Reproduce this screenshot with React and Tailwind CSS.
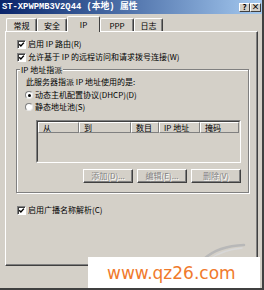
import React from "react";

function Check() {
  return (
    <span className="w-[9px] h-[9px] shrink-0 bg-white border border-t-[#808080] border-l-[#808080] border-r-white border-b-white shadow-[inset_1px_1px_0_#404040] flex items-center justify-center">
      <svg width="7" height="7" viewBox="0 0 7 7">
        <path d="M1.2 3.2 L2.9 5 L5.9 1.6" stroke="#000" strokeWidth="1.4" fill="none" />
      </svg>
    </span>
  );
}

function Radio({ on }) {
  return (
    <span className="w-[8px] h-[8px] shrink-0 rounded-full bg-white border border-t-[#808080] border-l-[#808080] border-r-[#e8e8e8] border-b-[#e8e8e8] flex items-center justify-center">
      {on && <span className="w-[3px] h-[3px] rounded-full bg-black" />}
    </span>
  );
}

function Tab({ label, w, selected }) {
  if (selected) {
    return (
      <div
        className={`${w} h-[16px] -mb-[1px] relative z-10 bg-[#d4d0c8] border-t border-l border-r border-t-white border-l-white border-r-[#404040] rounded-t-[2px] flex items-start justify-center pt-[3px] text-[8px] leading-[9px]`}
      >
        {label}
      </div>
    );
  }
  return (
    <div
      className={`${w} h-[13px] bg-[#d4d0c8] border-t border-l border-r border-t-white border-l-white border-r-[#404040] shadow-[inset_-1px_0_0_#808080] rounded-t-[2px] flex items-start justify-center pt-[2px] text-[8px] leading-[9px]`}
    >
      {label}
    </div>
  );
}

function HeadCell({ label, w }) {
  return (
    <div className={`${w} h-[11px] border-t border-l border-r border-b border-t-white border-l-white border-r-[#808080] border-b-[#808080] pl-[4px] text-[8px] leading-[9px] flex items-center`}>
      {label}
    </div>
  );
}

function DisBtn({ label }) {
  return (
    <div className="w-[50px] h-[14px] bg-[#d4d0c8] border border-t-white border-l-white border-r-[#404040] border-b-[#404040] shadow-[inset_-1px_-1px_0_#808080] flex items-center justify-center text-[8px] leading-none text-[#808080] [text-shadow:1px_1px_0_#fff]">
      {label}
    </div>
  );
}

function TitleBtn({ children }) {
  return (
    <div className="w-[11px] h-[9px] bg-[#d4d0c8] border border-t-white border-l-white border-r-[#404040] border-b-[#404040] flex items-center justify-center text-[8px] font-bold leading-none text-black">
      {children}
    </div>
  );
}

export default function App() {
  return (
    <div className="w-[264px] h-[290px] bg-[#d4d0c8] relative overflow-hidden flex flex-col border-r-2 border-b-2 border-r-[#404040] border-b-[#404040] text-black font-['Noto_Sans_CJK_SC','Liberation_Sans',sans-serif]">
      {/* title bar */}
      <div className="h-[14px] shrink-0 flex items-center bg-linear-to-r from-[#0a246a] to-[#a6caf0] pl-[2px] pr-[1px]">
        <span className="text-white font-bold text-[8.8px] leading-none whitespace-nowrap font-['Liberation_Mono','Noto_Sans_CJK_SC',monospace]">
          ST-XPWPMB3V2Q44 (本地) 属性
        </span>
        <div className="ml-auto flex">
          <TitleBtn>?</TitleBtn>
          <TitleBtn>×</TitleBtn>
        </div>
      </div>

      {/* tabs */}
      <div className="h-[17px] shrink-0 flex items-end pl-[6px]">
        <Tab label="常规" w="w-[31px]" />
        <Tab label="安全" w="w-[30px]" />
        <Tab label="IP" w="w-[33px]" selected />
        <Tab label="PPP" w="w-[34px]" />
        <Tab label="日志" w="w-[29px]" />
      </div>

      {/* panel */}
      <div className="h-[235px] shrink-0 ml-[5px] mr-[4px] border border-t-white border-l-white border-r-[#404040] border-b-[#404040] shadow-[inset_-1px_-1px_0_#808080] flex flex-col pt-[6px] pl-[10px] pr-[8px] text-[8px] leading-none">
        <div className="h-[12px] flex items-center gap-[2px] pl-[1px]">
          <Check />
          <span>启用 IP 路由(R)</span>
        </div>
        <div className="h-[12px] mt-[1px] flex items-center gap-[2px] pl-[1px]">
          <Check />
          <span className="whitespace-nowrap">允许基于 IP 的远程访问和请求拨号连接(W)</span>
        </div>

        {/* group box */}
        <div className="mt-[6px] border border-[#808080] shadow-[inset_1px_1px_0_#fff,1px_1px_0_#fff] flex flex-col pb-[9px]">
          <div className="-mt-[6px] ml-[3px] px-[1px] h-[11px] self-start bg-[#d4d0c8] flex items-center">
            IP 地址指派
          </div>
          <div className="mt-[1px] h-[12px] pl-[9px] flex items-center">此服务器指派 IP 地址使用的是:</div>
          <div className="mt-[1px] h-[12px] pl-[8px] flex items-center gap-[2px]">
            <Radio on />
            <span>动态主机配置协议(DHCP)(D)</span>
          </div>
          <div className="h-[12px] pl-[8px] flex items-center gap-[2px]">
            <Radio />
            <span>静态地址池(S)</span>
          </div>

          {/* list */}
          <div className="mt-[7px] ml-[19px] mr-[7px] h-[43px] border border-t-[#808080] border-l-[#808080] border-r-white border-b-white">
            <div className="h-full border border-t-[#404040] border-l-[#404040] border-r-[#d4d0c8] border-b-[#d4d0c8] bg-[#d4d0c8] flex flex-col">
              <div className="flex">
                <HeadCell label="从" w="w-[41px]" />
                <HeadCell label="到" w="w-[52px]" />
                <HeadCell label="数目" w="w-[28px]" />
                <HeadCell label="IP 地址" w="w-[41px]" />
                <HeadCell label="掩码" w="flex-1" />
              </div>
            </div>
          </div>

          {/* buttons */}
          <div className="mt-[6px] mr-[7px] flex justify-end gap-[4px]">
            <DisBtn label="添加(D)..." />
            <DisBtn label="编辑(E)..." />
            <DisBtn label="删除(V)" />
          </div>
        </div>

        <div className="mt-[11px] h-[12px] flex items-center gap-[2px] pl-[1px]">
          <Check />
          <span>启用广播名称解析(C)</span>
        </div>
      </div>

      {/* watermark */}
      <svg className="absolute left-[200px] top-[242px]" width="48" height="18" viewBox="0 0 48 18">
        <path d="M4 17 Q 18 4 44 3" stroke="#b8b8b8" strokeWidth="2.5" fill="none" strokeLinecap="round" />
        <path d="M10 17 Q 22 8 42 6" stroke="#d8d8d8" strokeWidth="1.5" fill="none" strokeLinecap="round" />
      </svg>
      <div className="absolute left-[88px] top-[257px] w-[172px] h-[31px] bg-white flex items-center pl-[19px] pt-[2px]">
        <span className="text-[17px] leading-none text-[#f07a2c] font-['DejaVu_Sans',sans-serif]">www.qz26.com</span>
      </div>
    </div>
  );
}
